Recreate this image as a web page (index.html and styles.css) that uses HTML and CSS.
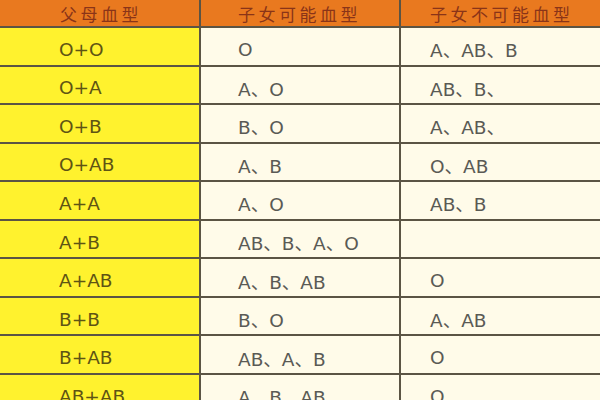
FILE: index.html
```html
<!DOCTYPE html>
<html lang="zh">
<head>
<meta charset="utf-8">
<title>血型遗传表</title>
<link rel="stylesheet" href="styles.css">
</head>
<body>
<div class="table">
  <div class="cell head c1">父母血型</div>
  <div class="cell head c2">子女可能血型</div>
  <div class="cell head c3">子女不可能血型</div>

  <div class="cell par">O+O</div><div class="cell kid c2">O</div><div class="cell kid c3">A、AB、B</div>
  <div class="cell par">O+A</div><div class="cell kid c2">A、O</div><div class="cell kid c3">AB、B、</div>
  <div class="cell par">O+B</div><div class="cell kid c2">B、O</div><div class="cell kid c3">A、AB、</div>
  <div class="cell par">O+AB</div><div class="cell kid c2">A、B</div><div class="cell kid c3">O、AB</div>
  <div class="cell par">A+A</div><div class="cell kid c2">A、O</div><div class="cell kid c3">AB、B</div>
  <div class="cell par">A+B</div><div class="cell kid c2">AB、B、A、O</div><div class="cell kid c3"></div>
  <div class="cell par">A+AB</div><div class="cell kid c2">A、B、AB</div><div class="cell kid c3">O</div>
  <div class="cell par">B+B</div><div class="cell kid c2">B、O</div><div class="cell kid c3">A、AB</div>
  <div class="cell par">B+AB</div><div class="cell kid c2">AB、A、B</div><div class="cell kid c3">O</div>
  <div class="cell par">AB+AB</div><div class="cell kid c2">A、B、AB</div><div class="cell kid c3">O</div>
</div>
</body>
</html>
```

FILE: styles.css
```css
html, body {
  margin: 0;
  padding: 0;
  width: 600px;
  height: 400px;
  overflow: hidden;
  background: #fffbe9;
}

.table {
  display: grid;
  grid-template-columns: 199px 198px 199px;
  grid-template-rows: 26px repeat(10, 36.56px);
  gap: 2px;
  background: #5b5444;
  width: 600px;
  font-family: "DejaVu Sans", "Noto Sans CJK SC", sans-serif;
}

.cell {
  display: flex;
  align-items: center;
  font-size: 18.5px;
  color: #5a5a55;
  padding-top: 6px;
  box-sizing: border-box;
  white-space: nowrap;
}

.head {
  background: #e9791f;
  color: #8a3418;
  font-family: "Noto Sans CJK SC", sans-serif;
  font-size: 17px;
  letter-spacing: 3.5px;
  padding-top: 0;
}

.c1 { padding-left: 60px; }
.c2 { padding-left: 37px; }
.c3 { padding-left: 29px; }

.par {
  background: #fff22e;
  color: #5e5414;
  padding-left: 59px;
}

.kid {
  background: #fffbe9;
}
```
